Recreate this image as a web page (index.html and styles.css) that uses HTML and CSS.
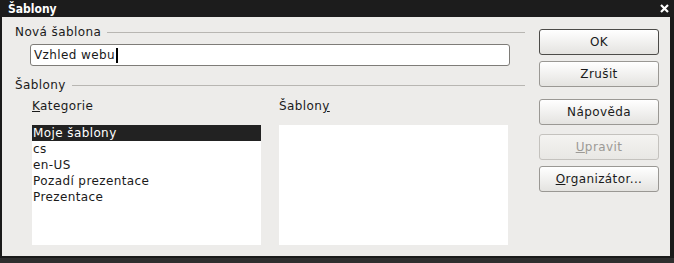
FILE: index.html
```html
<!DOCTYPE html>
<html lang="cs">
<head>
    <meta charset="UTF-8">
    <title>Šablony</title>
    <link rel="stylesheet" href="styles.css">
</head>
<body>

    <!-- okno dialogu -->
    <div class="window">
        <div class="titlebar">
            <span class="title">Šablony</span>
            <svg class="close" width="9" height="9" viewBox="0 0 9 9">
                <path d="M1 1 L8 8 M8 1 L1 8" stroke="#fff" stroke-width="2.2" fill="none"/>
            </svg>
        </div>

        <div class="content">
            <div class="main">
                <div class="group-head">
                    <span>Nová šablona</span>
                    <div class="rule"></div>
                </div>
                <div class="name-input">Vzhled webu<span class="caret"></span></div>

                <div class="group-head second">
                    <span>Šablony</span>
                    <div class="rule"></div>
                </div>

                <div class="lists">
                    <div class="list-col">
                        <div class="list-label"><u>K</u>ategorie</div>
                        <div class="listbox">
                            <div class="item selected">Moje šablony</div>
                            <div class="item">cs</div>
                            <div class="item">en-US</div>
                            <div class="item">Pozadí prezentace</div>
                            <div class="item">Prezentace</div>
                        </div>
                    </div>
                    <div class="list-col">
                        <div class="list-label">Šablon<u>y</u></div>
                        <div class="listbox"></div>
                    </div>
                </div>
            </div>

            <div class="buttons">
                <button class="btn default">OK</button>
                <button class="btn gap-6">Zrušit</button>
                <button class="btn gap-12">Nápověda</button>
                <button class="btn gap-9" disabled><u>U</u>pravit</button>
                <button class="btn gap-6"><u>O</u>rganizátor...</button>
            </div>
        </div>
    </div>

</body>
</html>
```

FILE: styles.css
```css
/* základ */
html, body {
    margin: 0;
    padding: 0;
    background: #1a1a1a;
    font-family: "DejaVu Sans", sans-serif;
    font-size: 12px;
    color: #1a1a1a;
}

/* okno */
.window {
    width: 674px;
    height: 263px;
    display: flex;
    flex-direction: column;
    background: #1a1a1a;
    box-sizing: border-box;
    border-bottom: 5px solid #2e2e2e;
}

.titlebar {
    height: 17px;
    flex-shrink: 0;
    display: flex;
    align-items: center;
    justify-content: space-between;
    padding: 0 5px 0 8px;
    background: #1c1c1c;
    color: #ffffff;
}

.title {
    font-family: "DejaVu Sans Condensed", "DejaVu Sans", sans-serif;
    font-weight: bold;
    font-size: 12px;
}

.content {
    flex: 1;
    display: flex;
    margin: 0 4px 2px 2px;
    background: #edecea;
    letter-spacing: 0.4px;
}

/* levá část */
.main {
    width: 512px;
    padding-left: 13px;
}

.group-head {
    display: flex;
    align-items: center;
    margin-top: 8px;
    height: 14px;
    line-height: 14px;
}

.group-head.second {
    margin-top: 12px;
}

.rule {
    flex: 1;
    height: 1px;
    margin-left: 6px;
    margin-right: 2px;
    background: #b8b6b2;
}

.name-input {
    margin: 5px 0 0 15px;
    width: 480px;
    height: 22px;
    box-sizing: border-box;
    border: 1px solid #7e7c78;
    border-radius: 3px;
    background: #ffffff;
    padding: 0 3px;
    line-height: 20px;
    display: flex;
    align-items: center;
}

.caret {
    width: 2px;
    height: 15px;
    background: #000;
    margin-left: 1px;
}

.lists {
    display: flex;
    gap: 18px;
    margin: 7px 0 0 17px;
}

.list-label {
    height: 14px;
    line-height: 14px;
    margin-bottom: 12px;
}

.listbox {
    width: 229px;
    height: 120px;
    background: #ffffff;
}

.item {
    height: 16px;
    line-height: 16px;
    padding-left: 1px;
}

.item.selected {
    background: #222222;
    color: #ffffff;
}

/* tlačítka */
.buttons {
    display: flex;
    flex-direction: column;
    margin-left: 12px;
    padding-top: 12px;
    width: 120px;
}

.btn {
    height: 26px;
    box-sizing: border-box;
    border: 1px solid #9a9894;
    border-radius: 3px;
    background: linear-gradient(#ffffff, #e4e3e0);
    font-family: "DejaVu Sans", sans-serif;
    font-size: 12px;
    letter-spacing: 0.4px;
    color: #1a1a1a;
    padding: 0;
}

.btn.default {
    border-color: #4c4b48;
}

.btn:disabled {
    color: #9c9a96;
    border-color: #c4c2be;
    background: linear-gradient(#f4f3f1, #e8e7e4);
}

.gap-6 { margin-top: 6px; }
.gap-9 { margin-top: 9px; }
.gap-12 { margin-top: 12px; }
```
